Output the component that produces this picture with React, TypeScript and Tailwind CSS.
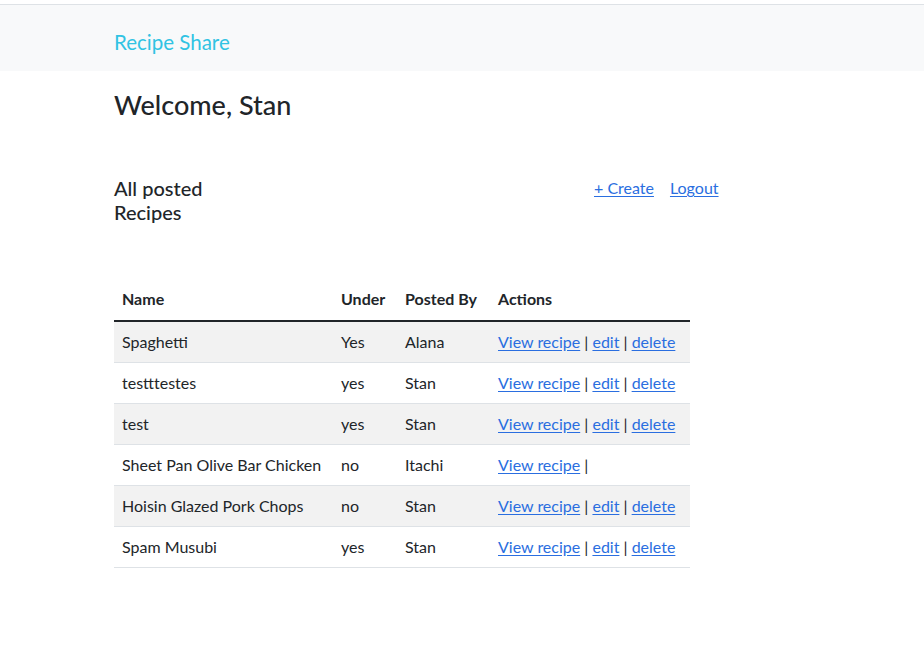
import React from "react";

type Recipe = {
  name: string;
  under: string;
  postedBy: string;
  owner: boolean;
};

const recipes: Recipe[] = [
  { name: "Spaghetti", under: "Yes", postedBy: "Alana", owner: true },
  { name: "testttestes", under: "yes", postedBy: "Stan", owner: true },
  { name: "test", under: "yes", postedBy: "Stan", owner: true },
  { name: "Sheet Pan Olive Bar Chicken", under: "no", postedBy: "Itachi", owner: false },
  { name: "Hoisin Glazed Pork Chops", under: "no", postedBy: "Stan", owner: true },
  { name: "Spam Musubi", under: "yes", postedBy: "Stan", owner: true },
];

const link = "text-[#2a6ee0] underline underline-offset-2";

export default function App() {
  return (
    <div
      className="min-h-[647px] bg-white text-[#212529] text-base"
      style={{ fontFamily: 'Lato, "Segoe UI", sans-serif' }}
    >
      <div className="h-[4px]" />
      <nav className="h-[67px] border-t border-[#dee2e6] bg-[#f8f9fa]">
        <div className="mx-auto flex h-full w-[720px] items-center px-3 pt-[8px]">
          <span className="text-[20.5px] leading-[30px] text-[#31c3e3]">Recipe Share</span>
        </div>
      </nav>

      <main className="mx-auto w-[720px] px-3">
        <h3 className="mt-[18px] text-[27px] font-medium leading-[31px]">Welcome, Stan</h3>

        <div className="mt-[56px] flex items-start">
          <h5 className="w-[96px] text-[20px] font-medium leading-[24px]">All posted Recipes</h5>
          <div className="ml-[384px] flex gap-4 leading-[24px]">
            <a className={link}>+ Create</a>
            <a className={link}>Logout</a>
          </div>
        </div>

        <table className="mt-[56px] w-[576px] table-fixed border-collapse text-left">
          <thead>
            <tr className="border-b-2 border-[#212529]">
              <th className="w-[219px] whitespace-nowrap px-2 pb-[9px] pt-[7px] font-bold">Name</th>
              <th className="w-[64px] whitespace-nowrap px-2 pb-[9px] pt-[7px] font-bold">Under</th>
              <th className="w-[93px] whitespace-nowrap px-2 pb-[9px] pt-[7px] font-bold">Posted By</th>
              <th className="whitespace-nowrap px-2 pb-[9px] pt-[7px] font-bold">Actions</th>
            </tr>
          </thead>
          <tbody>
            {recipes.map((r, i) => (
              <tr
                key={r.name}
                className={`h-[41px] border-b border-[#dee2e6] ${i % 2 === 0 ? "bg-[#f2f2f2]" : "bg-white"}`}
              >
                <td className="whitespace-nowrap px-2 align-middle">{r.name}</td>
                <td className="whitespace-nowrap px-2 align-middle">{r.under}</td>
                <td className="whitespace-nowrap px-2 align-middle">{r.postedBy}</td>
                <td className="whitespace-nowrap px-2 align-middle">
                  <a className={link}>View recipe</a> |{" "}
                  {r.owner && (
                    <>
                      <a className={link}>edit</a> | <a className={link}>delete</a>
                    </>
                  )}
                </td>
              </tr>
            ))}
          </tbody>
        </table>
      </main>
    </div>
  );
}
